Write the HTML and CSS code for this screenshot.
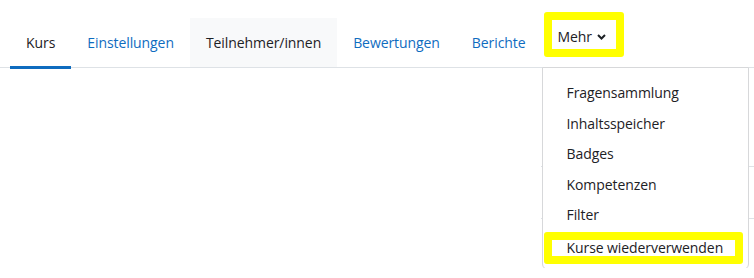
FILE: index.html
```html
<!DOCTYPE html>
<html lang="de">
<head>
    <meta charset="UTF-8">
    <title>Kurs</title>
    <link rel="stylesheet" href="styles.css">
</head>
<body>

<div class="secondary-nav">
    <ul class="nav-tabs">
        <li><a class="nav-link active" href="#">Kurs</a></li>
        <li><a class="nav-link" href="#">Einstellungen</a></li>
        <li><a class="nav-link hover" href="#">Teilnehmer/innen</a></li>
        <li><a class="nav-link" href="#">Bewertungen</a></li>
        <li><a class="nav-link" href="#">Berichte</a></li>
        <li class="more">
            <a class="nav-link more-toggle" href="#">
                <span class="mark">Mehr
                    <svg class="caret" width="9" height="6" viewBox="0 0 9 6"><polyline points="1,1 4.5,4.5 8,1" fill="none" stroke="#1d2125" stroke-width="2"/></svg>
                </span>
            </a>
            <div class="dropdown-menu">
                <a class="dropdown-item" href="#">Fragensammlung</a>
                <a class="dropdown-item" href="#">Inhaltsspeicher</a>
                <a class="dropdown-item" href="#">Badges</a>
                <a class="dropdown-item" href="#">Kompetenzen</a>
                <a class="dropdown-item" href="#">Filter</a>
                <a class="dropdown-item marked" href="#">Kurse wiederverwenden</a>
            </div>
        </li>
    </ul>
</div>

<div class="page-content">
    <div class="row-line first"></div>
    <div class="row-line second"></div>
</div>

</body>
</html>
```

FILE: styles.css
```css
body {
    margin: 0;
    font-family: 'Open Sans', sans-serif;
    font-size: 14px;
    letter-spacing: -0.08px;
    color: #1d2125;
    background-color: #fff;
}
a {
    text-decoration: none;
}
.secondary-nav {
    padding: 18px 0 0 10px;
    border-bottom: 1px solid #dee2e6;
    position: relative;
    z-index: 2;
}
.nav-tabs {
    display: flex;
    list-style: none;
    margin: 0;
    padding: 0;
    height: 49px;
}
.nav-tabs li {
    position: relative;
}
.nav-link {
    display: flex;
    align-items: center;
    height: 49px;
    padding: 0 16px;
    color: #0f6cbf;
    line-height: 1.5;
}
.nav-link.active {
    color: #1d2125;
    position: relative;
}
.nav-link.active::after {
    content: "";
    position: absolute;
    left: 0;
    right: 0;
    bottom: -2px;
    height: 3px;
    background-color: #0f6cbf;
}
.nav-link.hover {
    color: #1d2125;
    background-color: #f8f9fa;
}
.more-toggle {
    align-items: flex-start;
    padding: 0 0 0 2px;
    color: #1d2125;
}
.mark {
    display: flex;
    align-items: center;
    gap: 5px;
    margin-top: -6px;
    padding: 6px 10px 2px 6px;
    border: 8px solid #ffff00;
    border-radius: 3px;
}
.caret {
    margin-top: 1px;
}
.dropdown-menu {
    position: absolute;
    top: 49px;
    left: 0;
    width: 205px;
    padding: 10px 0 5px;
    background-color: #fff;
    border: 1px solid #d7d8da;
    border-radius: 6px;
    border-top-left-radius: 0;
    border-top-right-radius: 0;
}
.dropdown-item {
    display: block;
    padding: 4px 24px;
    line-height: 22.5px;
    color: #1d2125;
    white-space: nowrap;
}
.dropdown-item.marked {
    margin: 1px 5px 0 1px;
    padding: 0 15px;
    line-height: 16px;
    border: 8px solid #ffff00;
    border-radius: 3px;
}
.page-content {
    box-sizing: border-box;
    height: 200px;
    padding-top: 98px;
}
.row-line {
    margin-left: 541px;
    border-top: 1px solid #dee2e6;
}
.row-line.second {
    margin-top: 51px;
}
```
